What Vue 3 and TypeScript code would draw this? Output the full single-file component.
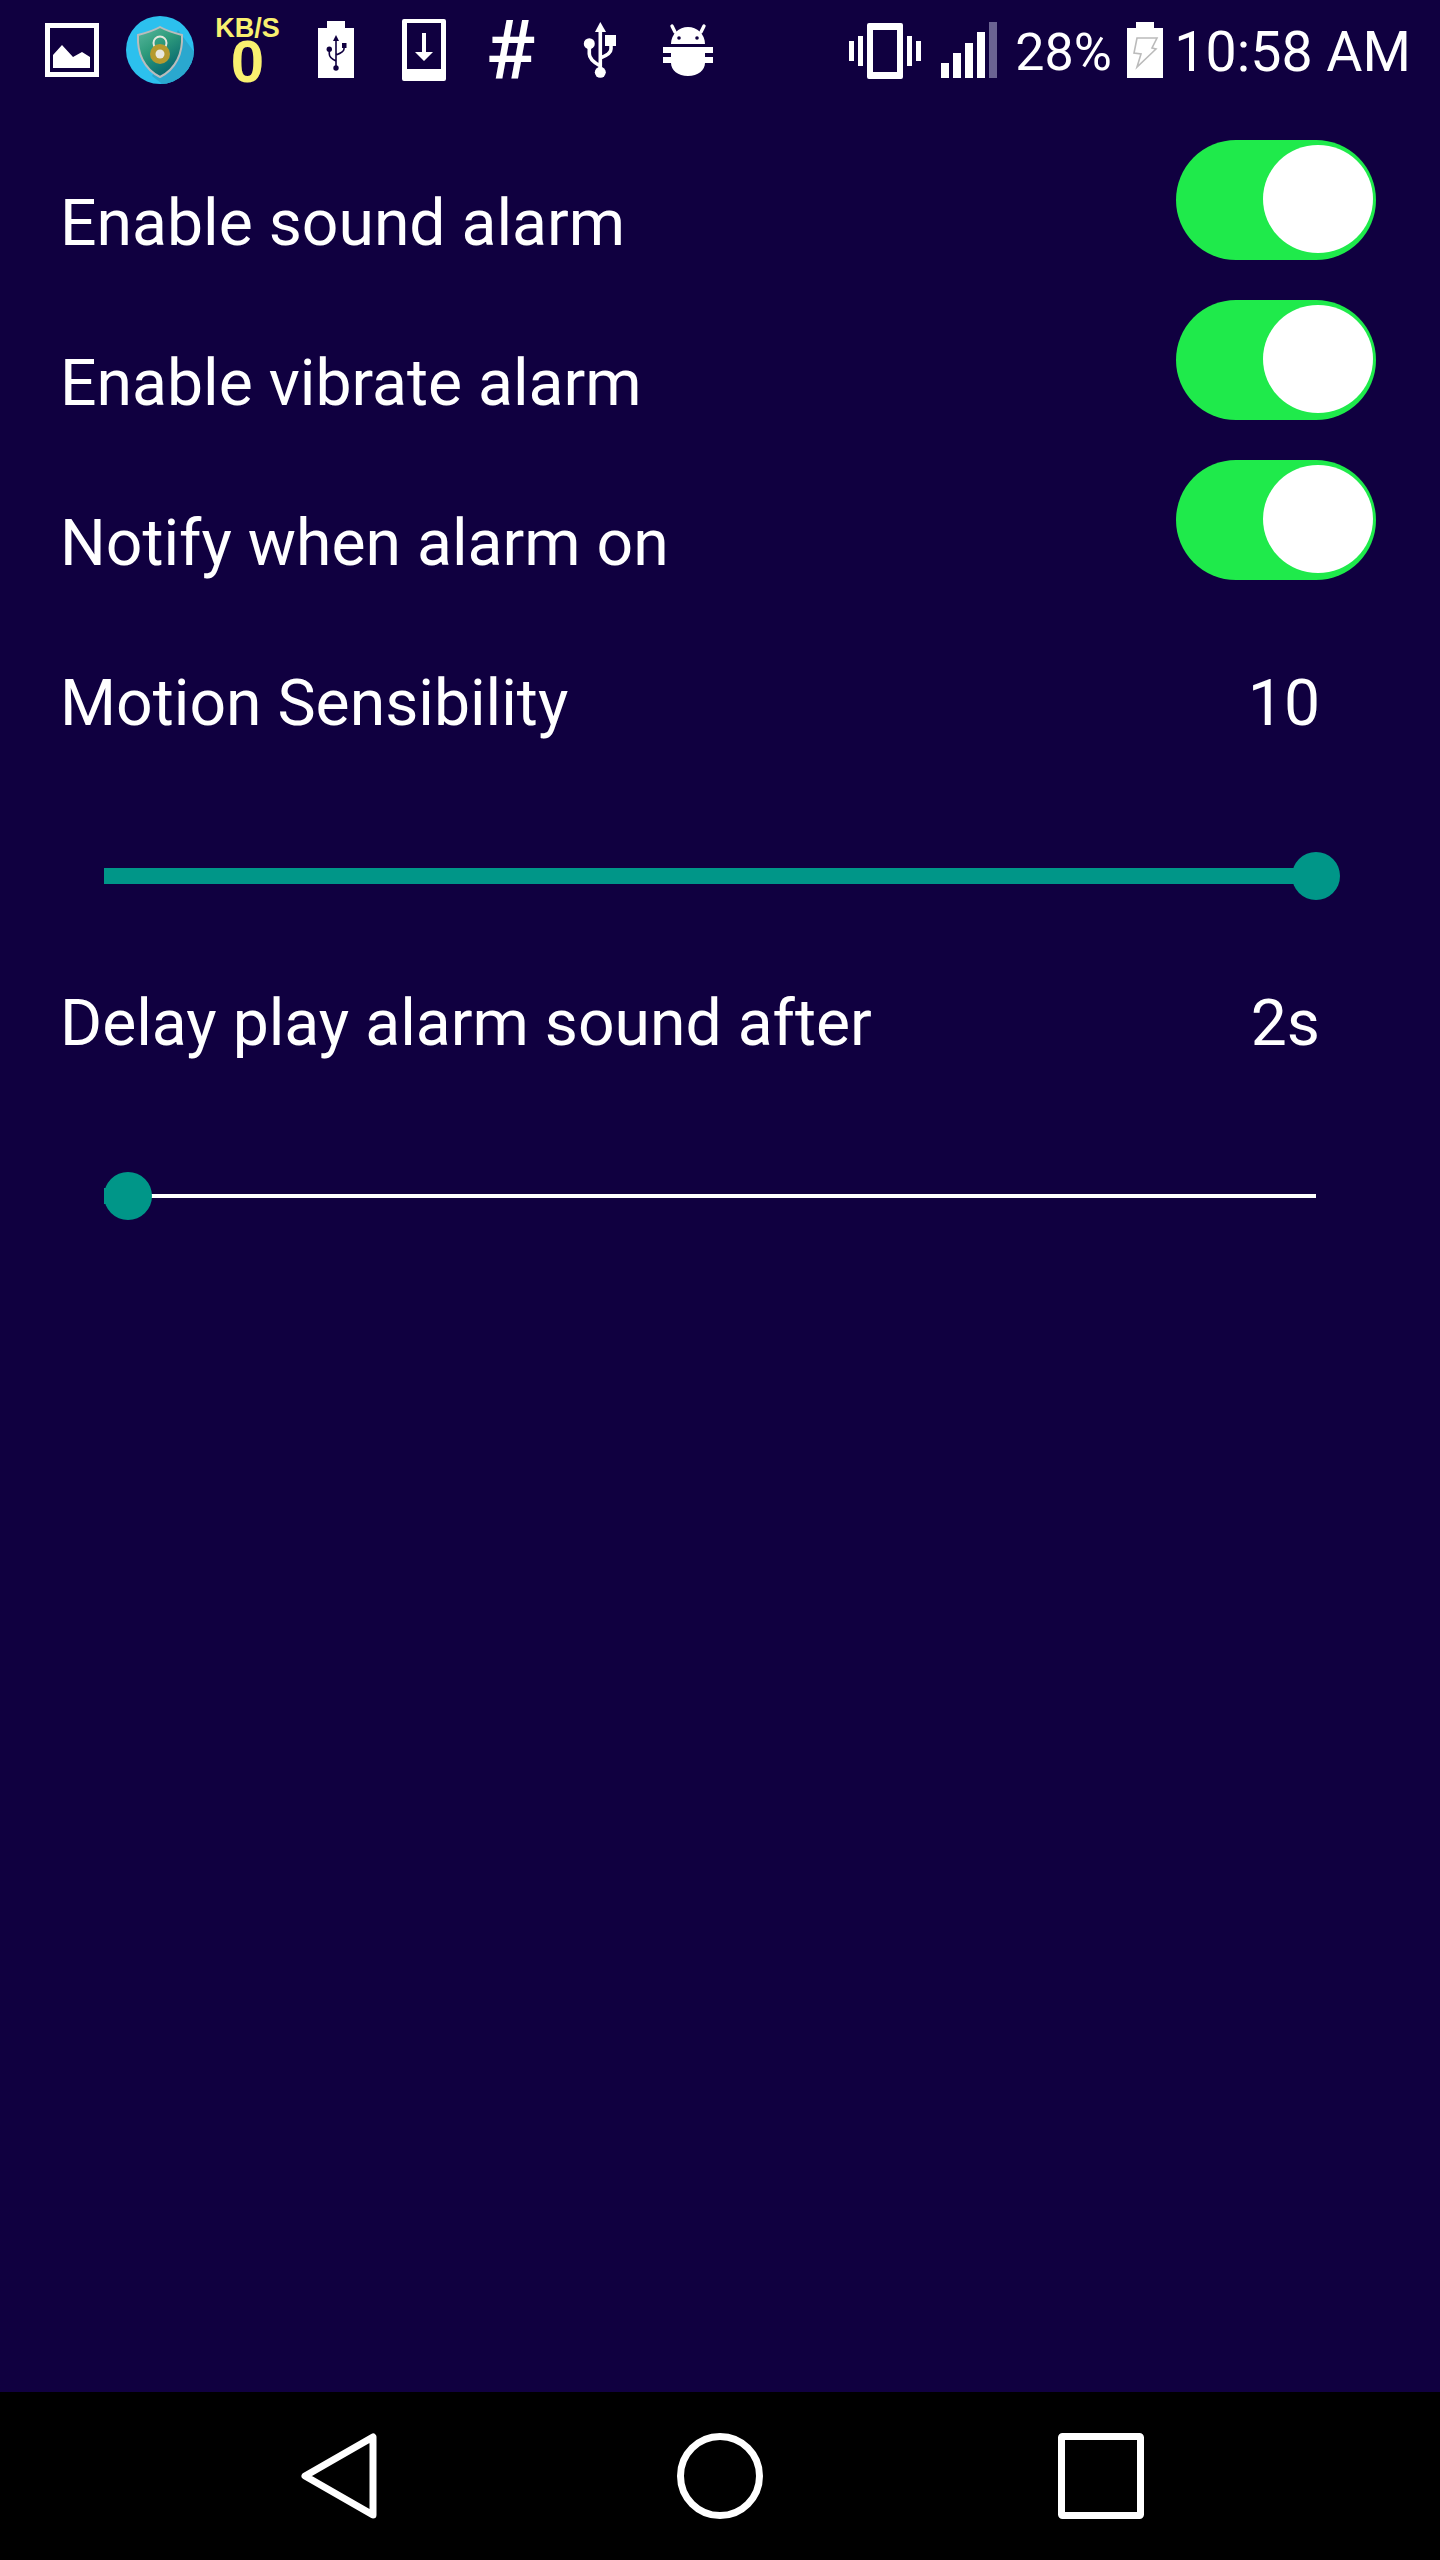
<script setup lang="ts">
interface ToggleRow { label: string }
interface SliderRow { label: string; value: string; full: boolean }
const toggles: ToggleRow[] = [
  { label: 'Enable sound alarm' },
  { label: 'Enable vibrate alarm' },
  { label: 'Notify when alarm on' },
]
const sliders: SliderRow[] = [
  { label: 'Motion Sensibility', value: '10', full: true },
  { label: 'Delay play alarm sound after', value: '2s', full: false },
]
</script>

<template>
  <div class="screen">
    <header class="status">
      <div class="status-left">
        <svg class="ic" width="75" height="100" viewBox="45 0 75 100">
          <rect x="47.5" y="25.5" width="49" height="49" fill="none" stroke="#fff" stroke-width="5" />
          <path d="M53 68V55L62 45 73 57 82 52 90 57V68Z" fill="#fff" />
        </svg>
        <svg class="ic" width="85" height="100" viewBox="120 0 85 100">
          <defs>
            <linearGradient id="sh" x1="0" y1="0" x2="0.6" y2="1">
              <stop offset="0" stop-color="#5bb8a0" />
              <stop offset="0.45" stop-color="#2f9c7c" />
              <stop offset="1" stop-color="#04646e" />
            </linearGradient>
            <clipPath id="disc"><circle cx="160" cy="50" r="34" /></clipPath>
          </defs>
          <circle cx="160" cy="50" r="34" fill="#2cc0ee" />
          <path d="M178 30 L200 60 L170 90 L152 76Z" fill="#2aa8cf" clip-path="url(#disc)" />
          <path d="M160 27C153 31 146 33 138 35C137 53 144 69 160 77C176 69 183 53 182 35C174 33 167 31 160 27Z" fill="url(#sh)" stroke="#b9bcbc" stroke-width="2" />
          <circle cx="160" cy="43" r="6.5" fill="none" stroke="#e6e6dc" stroke-width="2" />
          <circle cx="160" cy="54" r="10" fill="#b59a2f" />
          <circle cx="160" cy="54" r="4.5" fill="#e8e8e0" />
        </svg>
        <div class="speed">
          <span class="speed-unit">KB/S</span>
          <span class="speed-num">0</span>
        </div>
        <svg class="ic" width="90" height="100" viewBox="290 0 90 100">
          <path d="M327 21H345V28H354V78H318V28H327Z" fill="#fff" />
          <g fill="#100040" stroke="none">
            <path d="M336 35L339 41H333Z" />
            <circle cx="336" cy="68" r="2.7" />
            <circle cx="329.3" cy="49.3" r="2.7" />
            <rect x="342" y="43" width="4.5" height="5" />
          </g>
          <path d="M336 40V67M329.3 50V54Q329.3 58 336 61M344 47V49Q344 52 336 55" fill="none" stroke="#100040" stroke-width="1.6" />
        </svg>
        <svg class="ic" width="90" height="100" viewBox="380 0 90 100">
          <path fill-rule="evenodd" d="M404 19H444Q446 19 446 21V79Q446 81 444 81H404Q402 81 402 79V21Q402 19 404 19ZM407 23V69H441V23Z" fill="#fff" />
          <path d="M422 33H426V52H433L424 61 415 52H422Z" fill="#fff" />
        </svg>
        <span class="hash">#</span>
        <svg class="ic" width="80" height="100" viewBox="560 0 80 100">
          <path d="M600.3 22L606 32H595Z" fill="#fff" />
          <rect x="605" y="35" width="11" height="11" fill="#fff" />
          <circle cx="600.3" cy="72.3" r="5.5" fill="#fff" />
          <circle cx="589.3" cy="43.7" r="5.5" fill="#fff" />
          <path d="M600.3 30V70M589.3 46V54Q589.3 60 600.3 66M611 45V49Q611 54 600.3 58" fill="none" stroke="#fff" stroke-width="3.6" />
        </svg>
        <svg class="ic" width="80" height="100" viewBox="640 0 80 100">
          <path d="M671 44C671 34 679 27 688 27C697 27 705 34 705 44Z" fill="#fff" />
          <path d="M675 32L672 26M701 32L704 26" stroke="#fff" stroke-width="3.4" stroke-linecap="round" />
          <circle cx="679" cy="38" r="1.8" fill="#100040" />
          <circle cx="697" cy="38" r="1.8" fill="#100040" />
          <path d="M663 47H713V53H705V57H713V63H705C705 70 698 76 688 76C678 76 671 70 671 63H663V57H671V53H663Z" fill="#fff" />
        </svg>
      </div>
      <div class="status-right">
        <svg class="ic" width="92" height="100" viewBox="851 0 92 100">
          <path fill-rule="evenodd" d="M871 23H903Q905 23 905 25V77Q905 79 903 79H871Q869 79 869 77V25Q869 23 871 23ZM875 30V72H899V30Z" fill="#fff" />
          <path d="M851 41H856V61H851ZM860 36H865V66H860ZM909 36H914V66H909ZM918 41H923V61H918Z" fill="#fff" />
        </svg>
        <svg class="ic" width="74" height="100" viewBox="943 0 74 100">
          <path d="M943 63H951V78H943ZM955 53H963V78H955ZM967 43H975V78H967ZM979 32H987V78H979Z" fill="#fff" />
          <rect x="991" y="22" width="8" height="56" fill="#6b6392" />
        </svg>
        <span class="pct">28%</span>
        <svg class="ic" width="47" height="100" viewBox="1129 0 47 100">
          <path d="M1138 22H1156V28H1165V78H1129V28H1138Z" fill="#fff" />
          <path d="M1139 38H1159L1154 48 1158 49 1139 67 1143 54 1136 53Z" fill="none" stroke="#bbb" stroke-width="1.6" />
        </svg>
        <span class="time">10:58 AM</span>
      </div>
    </header>

    <main class="settings">
      <div v-for="t in toggles" :key="t.label" class="row">
        <span class="label">{{ t.label }}</span>
        <span class="toggle"><span class="knob"></span></span>
      </div>
      <section v-for="s in sliders" :key="s.label" class="slider-block">
        <div class="row">
          <span class="label">{{ s.label }}</span>
          <span class="label value">{{ s.value }}</span>
        </div>
        <div class="slider">
          <div class="track" :class="{ full: s.full }"></div>
          <div v-if="!s.full" class="stub"></div>
          <div class="thumb" :class="{ end: s.full }"></div>
        </div>
      </section>
    </main>

    <footer class="nav">
      <svg width="76" height="86" viewBox="0 0 76 86">
        <path d="M72 4V82L4 43Z" fill="none" stroke="#fff" stroke-width="7" stroke-linejoin="round" />
      </svg>
      <svg class="nav-home" width="86" height="86" viewBox="0 0 86 86">
        <circle cx="43" cy="43" r="39.5" fill="none" stroke="#fff" stroke-width="7" />
      </svg>
      <svg class="nav-recent" width="86" height="86" viewBox="0 0 86 86">
        <rect x="3.5" y="3.5" width="79" height="79" rx="1" fill="none" stroke="#fff" stroke-width="7" />
      </svg>
    </footer>
  </div>
</template>

<style scoped>
.screen {
  width: 1440px;
  height: 2560px;
  display: flex;
  flex-direction: column;
  background: #100040;
  color: #fff;
  font-family: Roboto, "Liberation Sans", sans-serif;
}
.status {
  height: 100px;
  flex: none;
  display: flex;
  justify-content: space-between;
  padding: 0 29px 0 45px;
}
.status-left, .status-right { display: flex; align-items: flex-start; }
.ic { display: block; flex: none; }
.speed {
  width: 85px;
  height: 100px;
  display: flex;
  flex-direction: column;
  align-items: center;
  color: #f9f070;
  font-family: "Liberation Sans", sans-serif;
  font-weight: 700;
}
.speed-unit { display: block; font-size: 27px; line-height: 22px; margin-top: 17px; }
.speed-num { display: block; font-size: 60px; line-height: 46px; }
.hash {
  width: 90px;
  height: 100px;
  padding-left: 16px;
  box-sizing: border-box;
  font-size: 82px;
  line-height: 100px;
  font-weight: 500;
}
.pct { width: 112px; font-size: 52px; line-height: 106px; }
.time { font-size: 55.5px; line-height: 106px; }

.settings {
  flex: 1;
  padding: 40px 64px 0 60px;
}
.row {
  height: 160px;
  display: flex;
  justify-content: space-between;
  align-items: flex-start;
}
.label {
  font-size: 64.25px;
  line-height: 70px;
  margin-top: 48px;
}
.value { margin-right: 56px; }
.toggle {
  position: relative;
  width: 200px;
  height: 120px;
  border-radius: 60px;
  background: #1fea4b;
}
.knob {
  position: absolute;
  top: 5px;
  left: 87px;
  width: 110px;
  height: 108px;
  border-radius: 50%;
  background: #fff;
}
.slider {
  position: relative;
  height: 160px;
  margin-left: 44px;
  width: 1212px;
}
.track {
  position: absolute;
  left: 0;
  right: 0;
  top: 94px;
  height: 4px;
  background: #fff;
}
.track.full {
  top: 88px;
  height: 16px;
  background: #009688;
}
.stub {
  position: absolute;
  left: 0;
  top: 88px;
  width: 24px;
  height: 16px;
  background: #009688;
}
.thumb {
  position: absolute;
  top: 72px;
  left: 0;
  width: 48px;
  height: 48px;
  border-radius: 50%;
  background: #009688;
}
.thumb.end { left: 1188px; }
.nav {
  height: 168px;
  flex: none;
  background: #000;
  display: flex;
  align-items: flex-start;
  padding: 41px 0 0 301px;
  box-sizing: border-box;
}
.nav-home { margin-left: 300px; }
.nav-recent { margin-left: 295px; }
</style>
